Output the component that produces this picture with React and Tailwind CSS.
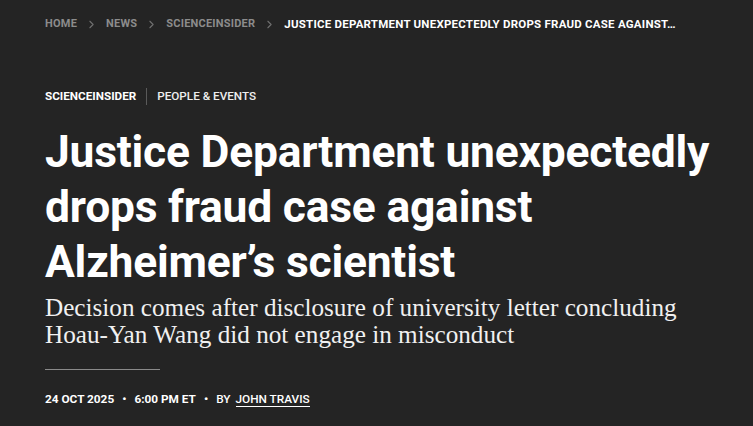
import { ChevronRight } from 'lucide-react';

const crumbs = ['Home', 'News', 'ScienceInsider'];

function App() {
  return (
    <div className="min-h-screen w-full bg-[#242424] font-['Roboto',sans-serif] text-white">
      <div className="pl-[45px] pr-[20px]">
        <nav className="flex h-[49px] items-center gap-[8px] text-[11px] font-bold uppercase tracking-[0.02em]">
          {crumbs.map((c) => (
            <span key={c} className="flex items-center gap-[8px] text-[#8c8c8c]">
              <span>{c}</span>
              <ChevronRight size={13} strokeWidth={2} className="text-[#6f6f6f]" />
            </span>
          ))}
          <span className="truncate text-[11.5px] tracking-[0.02em] text-white">Justice Department unexpectedly drops fraud case against…</span>
        </nav>

        <div className="mt-[39px] flex items-center text-[11.7px] uppercase leading-none">
          <span className="font-bold">ScienceInsider</span>
          <span className="mx-[10px] h-[17px] w-px bg-[#5a5a5a]" />
          <span className="font-medium text-[#eeeeee]">People &amp; Events</span>
        </div>

        <h1 className="mt-[20px] text-[44.4px] font-bold leading-[55px] tracking-[-0.005em]">
          Justice Department unexpectedly drops fraud case against Alzheimer’s scientist
        </h1>

        <p className="mt-[4px] max-w-[645px] font-['Liberation_Serif',serif] text-[25.2px] leading-[27px] text-[#f0f0f0]">
          Decision comes after disclosure of university letter concluding Hoau-Yan Wang did not engage in misconduct
        </p>

        <div className="mt-[21px] h-px w-[115px] bg-[#8a8a8a]" />

        <div className="mt-[21px] flex items-center text-[11.8px] uppercase text-white">
          <span className="font-bold">24 Oct 2025</span>
          <span className="mx-[8px] font-bold">•</span>
          <span className="font-bold">6:00 PM ET</span>
          <span className="mx-[8px] font-bold">•</span>
          <span className="font-medium">By</span>
          <span className="ml-[5px] border-b border-white font-medium leading-[14px]">John Travis</span>
        </div>
      </div>
    </div>
  );
}

export default App;
